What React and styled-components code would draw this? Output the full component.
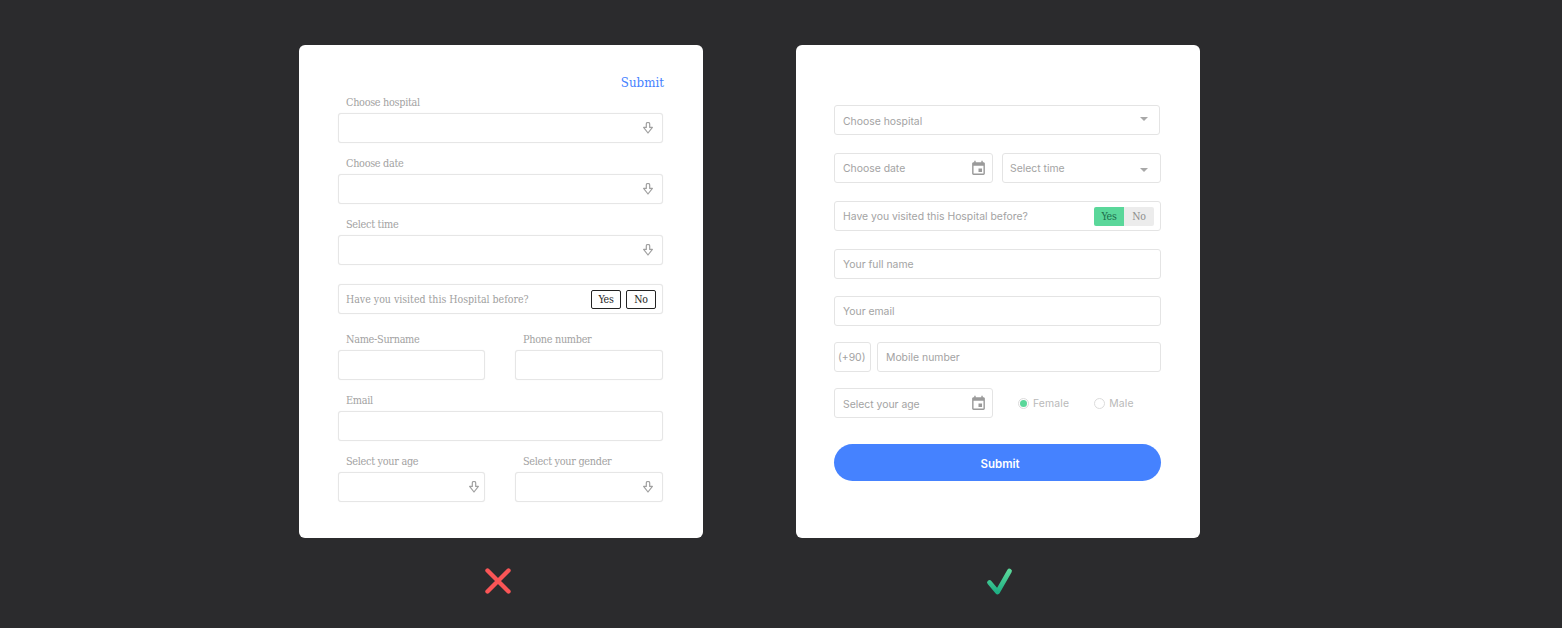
import React from "react";
import styled, { createGlobalStyle } from "styled-components";

const SLAB = `"DejaVu Serif Condensed", "DejaVu Serif", "Liberation Serif", serif`;
const ROUND = `Inter, "Open Sans", "Liberation Sans", sans-serif`;

const GlobalStyle = createGlobalStyle`
  html, body {
    margin: 0;
    padding: 0;
    background: #2b2b2d;
  }
  * { box-sizing: border-box; }
`;

const Page = styled.div`
  width: 1562px;
  height: 628px;
  padding: 45px 0 0 299px;
  display: flex;
  gap: 93px;
  overflow: hidden;
`;

const Column = styled.div`
  width: 404px;
  display: flex;
  flex-direction: column;
`;

const Card = styled.div`
  height: 493px;
  background: #ffffff;
  border-radius: 6px;
`;

const BadForm = styled(Card)`
  padding: 27px 40px 0 39px;
  font-family: ${SLAB};
`;

const SubmitRow = styled.div`
  height: 20px;
  margin-right: -1px;
  padding-top: 2px;
  display: flex;
  justify-content: flex-end;
  align-items: center;
`;

const SubmitLink = styled.span`
  font-size: 13.2px;
  line-height: 18px;
  color: #4582ff;
`;

const Field = styled.div`
  margin-top: ${(p) => p.$top ?? 10}px;
`;

const Label = styled.div`
  height: 21px;
  padding: 0 0 0 8px;
  font-size: 10.8px;
  line-height: 21px;
  letter-spacing: -0.3px;
  color: #a2a2a2;
`;

const BadBox = styled.div`
  height: 30px;
  padding: 0 ${(p) => p.$right ?? 9}px 0 ${(p) => p.$left ?? 8}px;
  display: flex;
  align-items: center;
  justify-content: space-between;
  background: #fff;
  border: 1px solid #e6e6e6;
  border-radius: 3px;
  box-shadow: 0 0 1px rgba(0, 0, 0, 0.1);
`;

const HalfRow = styled.div`
  display: grid;
  grid-template-columns: 147px 148px;
  gap: 30px;
`;

const Question = styled.span`
  font-size: 10.5px;
  color: #a0a0a0;
`;

const BadAnswers = styled.div`
  display: flex;
  gap: 5px;
`;

const BadAnswer = styled.span`
  width: 30px;
  height: 19px;
  display: flex;
  align-items: center;
  justify-content: center;
  font-size: 10.5px;
  letter-spacing: -0.2px;
  color: #1d1d1d;
  border: 1px solid #222;
  border-radius: 2px;
`;

const GoodForm = styled(Card)`
  padding: 60px 39px 0 38px;
  font-family: ${ROUND};
`;

const Row = styled.div`
  display: flex;
  gap: ${(p) => p.$gap ?? 9}px;
  margin-top: ${(p) => p.$top ?? 18}px;
`;

const GoodBox = styled.div`
  flex: ${(p) => p.$flex ?? "1 1 0"};
  min-width: 0;
  height: 30px;
  padding: ${(p) => p.$down ?? 0}px ${(p) => p.$right ?? 8}px 0 ${(p) => p.$left ?? 8}px;
  display: flex;
  align-items: center;
  justify-content: space-between;
  border: 1px solid #e4e4e4;
  border-radius: 3px;
  font-size: 10.4px;
  color: #a3a3a3;
`;

const Caret = styled.span`
  width: 0;
  height: 0;
  margin: ${(p) => p.$drop ?? 0}px ${(p) => p.$end ?? 4}px 0 0;
  border-left: 4.5px solid transparent;
  border-right: 4.5px solid transparent;
  border-top: 4.5px solid #a8a8a8;
`;

const Toggle = styled.div`
  display: flex;
  border-radius: 2px;
  overflow: hidden;
`;

const ToggleOption = styled.span`
  width: 30px;
  height: 19px;
  display: flex;
  align-items: center;
  justify-content: center;
  font-family: ${SLAB};
  font-size: 10.5px;
  letter-spacing: -0.2px;
  background: ${(p) => (p.$on ? "#5ad79a" : "#ececec")};
  color: ${(p) => (p.$on ? "#1c6b4b" : "#8f8f8f")};
`;

const Genders = styled.div`
  flex: 1 1 0;
  display: flex;
  align-items: center;
  padding-left: 16px;
  gap: 25px;
`;

const Gender = styled.label`
  display: flex;
  align-items: center;
  gap: 4px;
  font-size: 10.4px;
  letter-spacing: 0.15px;
  color: #b9b9b9;
`;

const Radio = styled.span`
  width: 11px;
  height: 11px;
  display: flex;
  align-items: center;
  justify-content: center;
  border: 1px solid #dcdcdc;
  border-radius: 50%;

  &::after {
    content: "";
    width: 7px;
    height: 7px;
    border-radius: 50%;
    background: ${(p) => (p.$on ? "#5ad79a" : "transparent")};
  }
`;

const SubmitButton = styled.button`
  width: 327px;
  height: 37px;
  margin-top: 26px;
  padding: 2px 0 0 5px;
  border: 0;
  border-radius: 19px;
  background: #4582ff;
  color: #fff;
  font-family: ${ROUND};
  font-size: 11.5px;
  font-weight: 600;
`;

const Verdict = styled.div`
  margin-top: 28px;
  display: flex;
  justify-content: center;

  svg {
    display: block;
    margin-left: ${(p) => p.$shift}px;
  }
`;

const CalendarSvg = styled.svg`
  margin-top: ${(p) => p.$lift ?? 0}px;
`;

const HintArrow = () => (
  <svg width="10" height="12" viewBox="0 0 10 12" fill="none" stroke="#a0a0a0" strokeWidth="1.2" strokeLinejoin="round">
    <path d="M3.3 5.4V2.1a1.7 1.7 0 0 1 3.4 0v3.3h2.7L5 11 .6 5.4z" />
  </svg>
);

const CalendarIcon = ({ lift }) => (
  <CalendarSvg $lift={lift} width="17" height="17" viewBox="0 0 24 24" fill="#9a9a9a">
    <path d="M17 12h-5v5h5v-5zM16 1v2H8V1H6v2H5c-1.11 0-1.99.9-1.99 2L3 19c0 1.1.89 2 2 2h14c1.1 0 2-.9 2-2V5c0-1.1-.9-2-2-2h-1V1h-2zm3 18H5V8h14v11z" />
  </CalendarSvg>
);

const Cross = () => (
  <svg width="30" height="30" viewBox="0 0 30 30" fill="none" stroke="#fa5556" strokeWidth="4.4" strokeLinecap="round">
    <path d="M4.5 4.5l21 21M25.5 4.5l-21 21" />
  </svg>
);

const Check = () => (
  <svg width="30" height="30" viewBox="0 0 30 30" fill="none" strokeWidth="4.8" strokeLinecap="round" strokeLinejoin="round">
    <defs>
      <linearGradient id="checkFill" x1="0" y1="0" x2="0" y2="1">
        <stop offset="0" stopColor="#5ad79a" />
        <stop offset="1" stopColor="#1fb084" />
      </linearGradient>
    </defs>
    <path d="M4.5 16.5l8 9.5L24.5 5" stroke="url(#checkFill)" />
  </svg>
);

const LabeledBox = ({ label, top, arrow, right }) => (
  <Field $top={top}>
    <Label>{label}</Label>
    <BadBox $right={right}>
      <span />
      {arrow && <HintArrow />}
    </BadBox>
  </Field>
);

const App = () => {
  return (
    <>
      <GlobalStyle />
      <Page>
        <Column>
          <BadForm>
            <SubmitRow>
              <SubmitLink>Submit</SubmitLink>
            </SubmitRow>
            <LabeledBox label="Choose hospital" top={0} arrow />
            <LabeledBox label="Choose date" arrow />
            <LabeledBox label="Select time" arrow />
            <Field $top={19}>
              <BadBox $left={7} $right={6}>
                <Question>Have you visited this Hospital before?</Question>
                <BadAnswers>
                  <BadAnswer>Yes</BadAnswer>
                  <BadAnswer>No</BadAnswer>
                </BadAnswers>
              </BadBox>
            </Field>
            <HalfRow>
              <LabeledBox label="Name-Surname" top={15} />
              <LabeledBox label="Phone number" top={15} />
            </HalfRow>
            <LabeledBox label="Email" />
            <HalfRow>
              <LabeledBox label="Select your age" arrow right={5} />
              <LabeledBox label="Select your gender" arrow />
            </HalfRow>
          </BadForm>
          <Verdict $shift={-7}>
            <Cross />
          </Verdict>
        </Column>

        <Column>
          <GoodForm>
            <Row $top={0}>
              <GoodBox $flex="0 0 326px" $down={2}>
                Choose hospital
                <Caret $drop={-4} $end={3} />
              </GoodBox>
            </Row>
            <Row>
              <GoodBox $flex="0 0 159px" $right={5}>
                Choose date
                <CalendarIcon />
              </GoodBox>
              <GoodBox $flex="0 0 159px" $left={7}>
                Select time
                <Caret $drop={4} />
              </GoodBox>
            </Row>
            <Row>
              <GoodBox $right={6}>
                Have you visited this Hospital before?
                <Toggle>
                  <ToggleOption $on>Yes</ToggleOption>
                  <ToggleOption>No</ToggleOption>
                </Toggle>
              </GoodBox>
            </Row>
            <Row>
              <GoodBox>Your full name</GoodBox>
            </Row>
            <Row $top={17}>
              <GoodBox>Your email</GoodBox>
            </Row>
            <Row $top={16} $gap={6}>
              <GoodBox $flex="0 0 37px" $left={3} $right={0}>
                (+90)
              </GoodBox>
              <GoodBox>Mobile number</GoodBox>
            </Row>
            <Row $top={16}>
              <GoodBox $flex="0 0 159px" $right={5} $down={2}>
                Select your age
                <CalendarIcon lift={-2} />
              </GoodBox>
              <Genders>
                <Gender>
                  <Radio $on />
                  Female
                </Gender>
                <Gender>
                  <Radio />
                  Male
                </Gender>
              </Genders>
            </Row>
            <SubmitButton>Submit</SubmitButton>
          </GoodForm>
          <Verdict $shift={4}>
            <Check />
          </Verdict>
        </Column>
      </Page>
    </>
  );
};

export default App;
